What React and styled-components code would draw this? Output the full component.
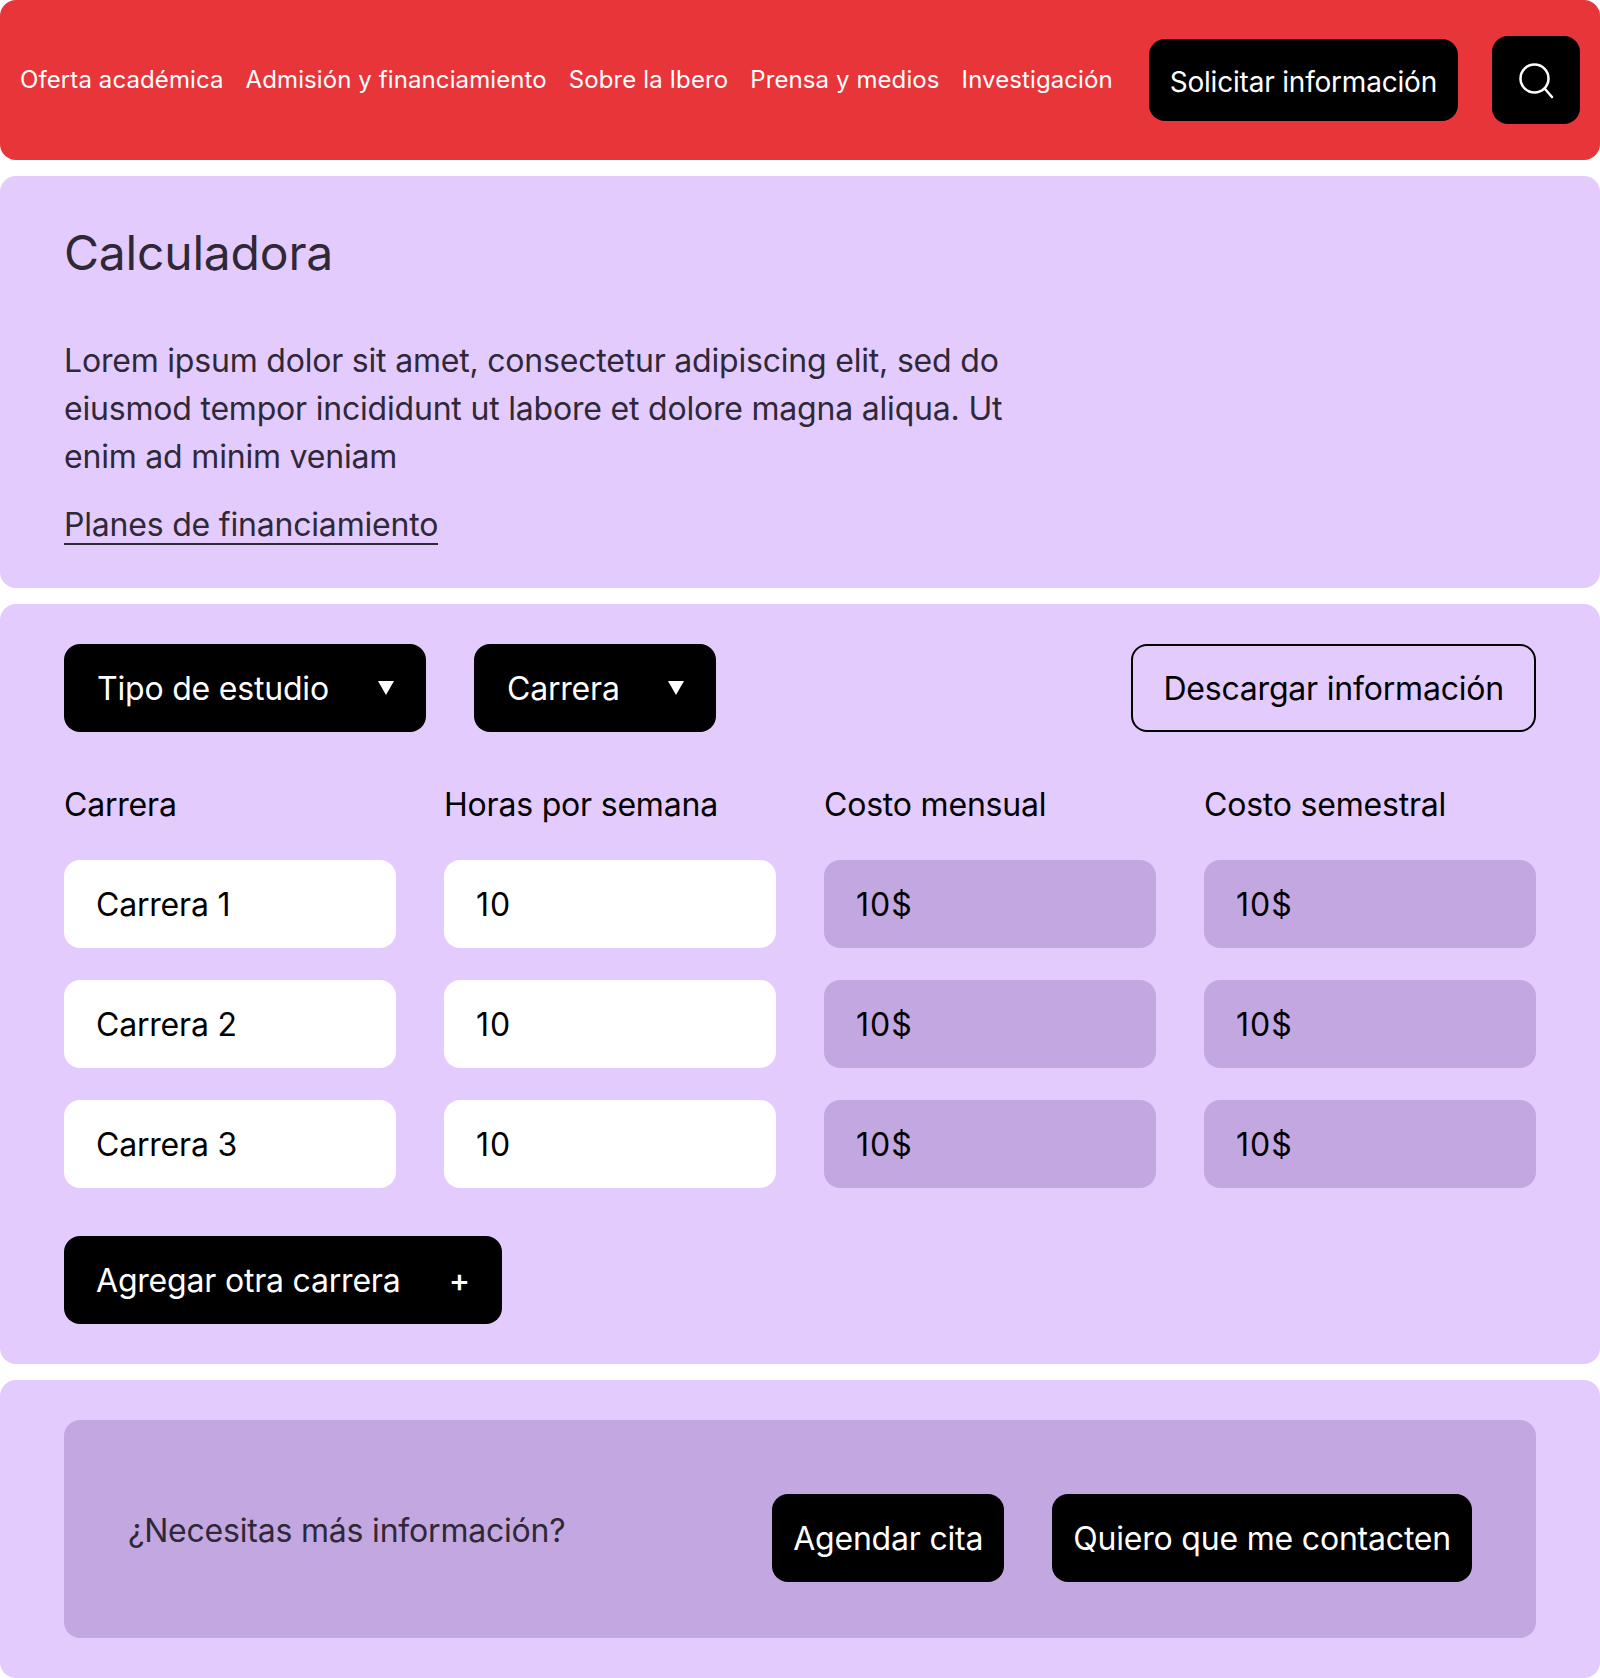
import styled, { createGlobalStyle } from "styled-components";
import { useState } from "react";

const GlobalStyle = createGlobalStyle`
  html, body {
    margin: 0;
    padding: 0;
    background: #ffffff;
  }
  * {
    box-sizing: border-box;
  }
  body {
    font-family: "Inter", "Liberation Sans", sans-serif;
    font-weight: 430;
    color: #000000;
    letter-spacing: -0.2px;
  }
  button {
    font-weight: inherit;
    letter-spacing: inherit;
  }
`;

const rows = [
  { name: "Carrera 1", hours: "10", monthly: "10$", semester: "10$" },
  { name: "Carrera 2", hours: "10", monthly: "10$", semester: "10$" },
  { name: "Carrera 3", hours: "10", monthly: "10$", semester: "10$" },
];

const navLinks = [
  "Oferta académica",
  "Admisión y financiamiento",
  "Sobre la Ibero",
  "Prensa y medios",
  "Investigación",
];

const SearchIcon = () => (
  <svg width="40" height="40" viewBox="0 0 40 40" fill="none" stroke="#fff" strokeWidth="2.5" strokeLinecap="round">
    <circle cx="18.5" cy="18.5" r="14" />
    <path d="M29 29l7 8" />
  </svg>
);

const Caret = () => (
  <svg width="16" height="14" viewBox="0 0 16 14" fill="#fff">
    <path d="M0 0h16L8 14z" />
  </svg>
);

const App = () => {
  const [list] = useState(rows);

  return (
    <Page>
      <GlobalStyle />
      <Header>
        <Nav>
          {navLinks.map((link) => (
            <NavLink key={link}>{link}</NavLink>
          ))}
        </Nav>
        <HeaderActions>
          <HeaderButton>Solicitar información</HeaderButton>
          <SearchButton>
            <SearchIcon />
          </SearchButton>
        </HeaderActions>
      </Header>

      <IntroPanel>
        <Title>Calculadora</Title>
        <Lead>
          Lorem ipsum dolor sit amet, consectetur adipiscing elit, sed do
          eiusmod tempor incididunt ut labore et dolore magna aliqua. Ut enim ad
          minim veniam
        </Lead>
        <PlanLink>Planes de financiamiento</PlanLink>
      </IntroPanel>

      <CalcPanel>
        <Toolbar>
          <Dropdown $width={362}>
            Tipo de estudio
            <Caret />
          </Dropdown>
          <Dropdown $width={242}>
            Carrera
            <Caret />
          </Dropdown>
          <OutlineButton>Descargar información</OutlineButton>
        </Toolbar>

        <Table>
          <ColumnLabel>Carrera</ColumnLabel>
          <ColumnLabel>Horas por semana</ColumnLabel>
          <ColumnLabel>Costo mensual</ColumnLabel>
          <ColumnLabel>Costo semestral</ColumnLabel>
          {list.map((row) => (
            <TableRow key={row.name}>
              <Cell>{row.name}</Cell>
              <Cell $numeric>{row.hours}</Cell>
              <Cell $numeric $readonly>{row.monthly}</Cell>
              <Cell $numeric $readonly>{row.semester}</Cell>
            </TableRow>
          ))}
        </Table>

        <AddButton>
          Agregar otra carrera
          <Plus>+</Plus>
        </AddButton>
      </CalcPanel>

      <ContactPanel>
        <ContactBox>
          <ContactText>¿Necesitas más información?</ContactText>
          <ContactActions>
            <BlackButton>Agendar cita</BlackButton>
            <BlackButton>Quiero que me contacten</BlackButton>
          </ContactActions>
        </ContactBox>
      </ContactPanel>
    </Page>
  );
};

const Page = styled.div`
  display: flex;
  flex-direction: column;
  gap: 16px;
  width: 1600px;
  height: 1678px;
  overflow: hidden;
`;

const Header = styled.header`
  display: flex;
  align-items: center;
  justify-content: space-between;
  height: 160px;
  padding: 0 20px;
  background: #e8353a;
  border-radius: 16px;
`;

const Nav = styled.nav`
  display: flex;
  align-items: center;
  gap: 22px;
`;

const NavLink = styled.a`
  font-size: 24px;
  font-weight: 400;
  line-height: 32px;
  letter-spacing: 0.1px;
  color: #ffffff;
  white-space: nowrap;
`;

const HeaderActions = styled.div`
  display: flex;
  align-items: center;
  gap: 34px;
`;

const BlackButton = styled.button`
  display: flex;
  align-items: center;
  height: 88px;
  padding: 0 21px;
  border: 0;
  border-radius: 16px;
  background: #000000;
  font-family: inherit;
  font-size: 32px;
  color: #ffffff;
  white-space: nowrap;
`;

const HeaderButton = styled(BlackButton)`
  height: 82px;
  padding-top: 3px;
  font-size: 28px;
`;

const SearchButton = styled.button`
  display: flex;
  align-items: center;
  justify-content: center;
  width: 88px;
  height: 88px;
  padding: 0;
  border: 0;
  border-radius: 16px;
  background: #000000;
`;

const Panel = styled.section`
  background: #e3cbfd;
  border-radius: 16px;
`;

const IntroPanel = styled(Panel)`
  height: 412px;
  padding: 45px 64px 0;
`;

const Title = styled.h1`
  margin: 0 0 52px;
  font-size: 48px;
  font-weight: 430;
  line-height: 64px;
  letter-spacing: -0.2px;
  color: #2f2836;
`;

const Lead = styled.p`
  width: 960px;
  margin: 0 0 26px;
  font-size: 32px;
  line-height: 48px;
  color: #2f2836;
`;

const PlanLink = styled.a`
  display: inline-block;
  font-size: 32px;
  line-height: 36px;
  color: #2f2836;
  border-bottom: 2px solid #2f2836;
`;

const CalcPanel = styled(Panel)`
  height: 760px;
  padding: 40px 64px;
`;

const Toolbar = styled.div`
  display: flex;
  align-items: center;
  gap: 48px;
`;

const Dropdown = styled.button`
  display: flex;
  align-items: center;
  justify-content: space-between;
  width: ${(props) => props.$width}px;
  height: 88px;
  padding: 0 32px 0 33px;
  border: 0;
  border-radius: 16px;
  background: #000000;
  font-family: inherit;
  font-size: 32px;
  color: #ffffff;
`;

const OutlineButton = styled.button`
  height: 88px;
  margin-left: auto;
  padding: 0 30px;
  border: 2px solid #000000;
  border-radius: 16px;
  background: transparent;
  font-family: inherit;
  font-size: 32px;
  color: #000000;
`;

const Table = styled.div`
  display: grid;
  grid-template-columns: repeat(4, 332px);
  column-gap: 48px;
  row-gap: 32px;
  margin-top: 48px;
`;

const TableRow = styled.div`
  display: contents;
`;

const ColumnLabel = styled.div`
  height: 48px;
  padding-top: 1px;
  font-size: 32px;
  line-height: 48px;
  color: #000000;
`;

const Cell = styled.div`
  display: flex;
  align-items: center;
  height: 88px;
  padding-left: 32px;
  border-radius: 16px;
  background: ${(props) => (props.$readonly ? "#c3a7e1" : "#ffffff")};
  font-size: 32px;
  letter-spacing: ${(props) => (props.$numeric ? "1px" : "inherit")};
  color: #000000;
`;

const AddButton = styled.button`
  display: flex;
  align-items: center;
  justify-content: space-between;
  width: 438px;
  height: 88px;
  margin-top: 48px;
  padding: 0 32px;
  border: 0;
  border-radius: 16px;
  background: #000000;
  font-family: inherit;
  font-size: 32px;
  color: #ffffff;
`;

const Plus = styled.span`
  font-size: 32px;
  font-weight: 500;
`;

const ContactPanel = styled(Panel)`
  flex: 1;
  padding: 40px 64px;
`;

const ContactBox = styled.div`
  display: flex;
  align-items: center;
  justify-content: space-between;
  height: 218px;
  padding: 0 64px;
  border-radius: 16px;
  background: #c3a7e1;
`;

const ContactText = styled.div`
  margin-top: 4px;
  font-size: 32px;
  line-height: 48px;
  color: #2f2836;
`;

const ContactActions = styled.div`
  display: flex;
  gap: 48px;
  margin-top: 18px;
`;

export default App;
